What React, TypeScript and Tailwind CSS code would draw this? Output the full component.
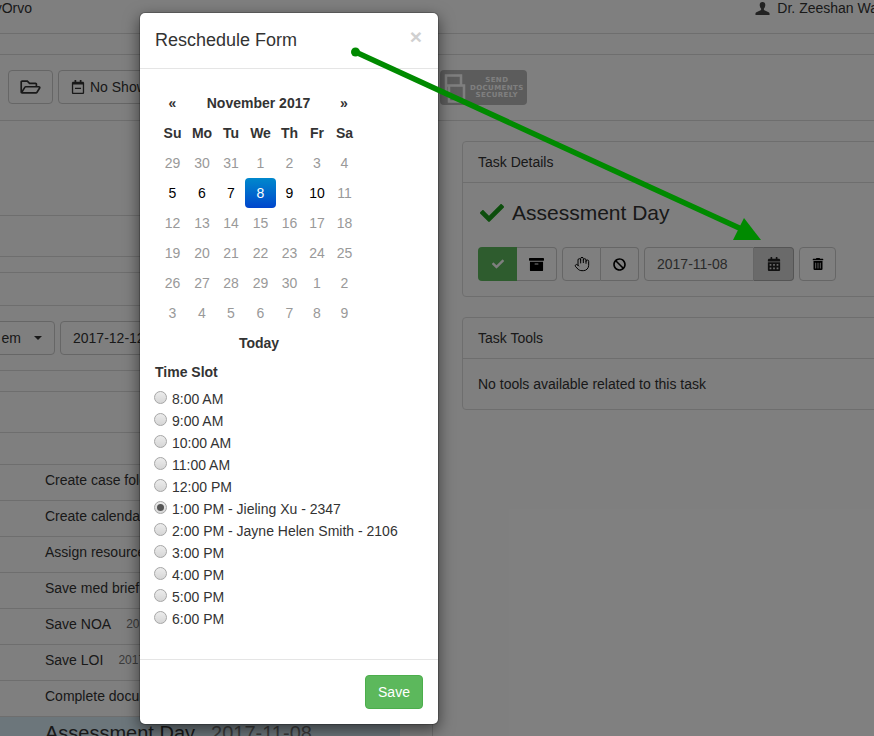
import { FaArchive, FaBan, FaCalendarAlt, FaCheck, FaRegCalendarMinus, FaRegFolderOpen, FaTrashAlt } from 'react-icons/fa'
import { Hand } from 'lucide-react'

const columns = ['w-[29px]', 'w-[30px]', 'w-[28px]', 'w-[31px]', 'w-[27px]', 'w-[28px]', 'w-[27px]']
const weekDays = ['Su', 'Mo', 'Tu', 'We', 'Th', 'Fr', 'Sa']
const weeks = [
  ['29', '30', '31', '1', '2', '3', '4'],
  ['5', '6', '7', '8', '9', '10', '11'],
  ['12', '13', '14', '15', '16', '17', '18'],
  ['19', '20', '21', '22', '23', '24', '25'],
  ['26', '27', '28', '29', '30', '1', '2'],
  ['3', '4', '5', '6', '7', '8', '9'],
]
const activeDays = ['5', '6', '7', '9', '10']

const slots = [
  '8:00 AM',
  '9:00 AM',
  '10:00 AM',
  '11:00 AM',
  '12:00 PM',
  '1:00 PM - Jieling Xu - 2347',
  '2:00 PM - Jayne Helen Smith - 2106',
  '3:00 PM',
  '4:00 PM',
  '5:00 PM',
  '6:00 PM',
]

const tasks = [
  { name: 'Create case folder' },
  { name: 'Create calendar' },
  { name: 'Assign resources' },
  { name: 'Save med brief' },
  { name: 'Save NOA', date: '2017-11-08' },
  { name: 'Save LOI', date: '2017-11-08' },
  { name: 'Complete documents' },
]

function Radio({ checked }: { checked?: boolean }) {
  return (
    <span className="mt-[-4px] mr-[5px] flex h-[13px] w-[13px] shrink-0 items-center justify-center rounded-full border border-[#a6a6a6] bg-gradient-to-b from-[#ececec] to-[#d6d6d6]">
      {checked && <span className="h-[7px] w-[7px] rounded-full bg-[#555]" />}
    </span>
  )
}

function Calendar() {
  return (
    <div className="ml-[18px] mt-[19px] w-[200px] text-sm text-[#333]">
      <div className="flex h-[30px] items-center font-bold">
        <span className="w-[29px] text-center">«</span>
        <span className="w-[143px] text-center">November 2017</span>
        <span className="w-[28px] text-center">»</span>
      </div>
      <div className="flex h-[30px] items-center font-bold">
        {weekDays.map((d, i) => (
          <span key={d} className={`${columns[i]} text-center`}>{d}</span>
        ))}
      </div>
      {weeks.map((week, w) => (
        <div key={w} className="flex h-[30px]">
          {week.map((day, i) => {
            const selected = w === 1 && day === '8'
            const current = w === 1 && activeDays.includes(day)
            return (
              <span
                key={i}
                className={`${columns[i]} flex items-center justify-center rounded ${
                  selected ? 'bg-gradient-to-b from-[#0088cc] to-[#0044cc] text-white' : current ? 'text-black' : 'text-[#999]'
                }`}
              >
                {day}
              </span>
            )
          })}
        </div>
      ))}
      <div className="flex h-[30px] items-center justify-center pl-[2px] font-bold">Today</div>
    </div>
  )
}

function RescheduleModal() {
  return (
    <div className="absolute left-[139px] top-[12px] flex h-[713px] w-[300px] flex-col rounded-md border border-black/20 bg-white bg-clip-padding shadow-[0_5px_15px_rgba(0,0,0,0.5)]">
      <div className="flex h-[56px] shrink-0 justify-between border-b border-[#e5e5e5] pl-[15px] pr-[16px]">
        <h4 className="mt-[14px] text-lg leading-[26px] text-[#333]">Reschedule Form</h4>
        <span className="mt-[9px] text-[21px] font-bold leading-[30px] text-[#d0d0d0]">×</span>
      </div>
      <Calendar />
      <div className="ml-[15px] mt-[4px] text-sm font-bold leading-5 text-[#333]">Time Slot</div>
      <div className="ml-[14px] mt-[6px]">
        {slots.map((slot, i) => (
          <div key={slot} className="flex h-[22px] items-center text-sm text-[#333]">
            <Radio checked={i === 5} />
            {slot}
          </div>
        ))}
      </div>
      <div className="mt-[29px] flex flex-1 justify-end border-t border-[#e5e5e5] pr-[15px] pt-[15px]">
        <button className="h-[34px] w-[58px] rounded border border-[#4cae4c] bg-[#5cb85c] text-sm text-white">Save</button>
      </div>
    </div>
  )
}

function LeftColumn() {
  return (
    <div className="w-[433px] shrink-0 border-r border-[#ddd] text-sm text-[#333]">
      <div className="h-[95px] border-b border-[#ddd]" />
      <div className="h-[41px] border-b border-[#ddd]" />
      <div className="h-[16px] border-b border-[#ddd]" />
      <div className="h-[33px] border-b border-[#ddd]" />
      <div className="flex h-[65px] gap-[5px] border-b border-[#ddd] pt-[15px]">
        <div className="-ml-[20px] flex h-[34px] w-[75px] items-center justify-end gap-[13px] rounded border border-[#ccc] pr-[12px]">
          <span className="-ml-[2px]">em</span>
          <span className="h-0 w-0 border-x-4 border-t-4 border-x-transparent border-t-[#333]" />
        </div>
        <div className="flex h-[34px] w-[120px] items-center rounded border border-[#ccc] pl-[12px]">2017-12-12</div>
      </div>
      <div className="h-[21px] border-b border-[#ddd]" />
      <div className="h-[41px] border-b border-[#ddd]" />
      <div className="h-[32px] border-b border-[#ddd]" />
      {tasks.map((task) => (
        <div key={task.name} className="flex h-[36px] items-center gap-[15px] border-b border-[#ddd] pb-[6px] pl-[45px]">
          {task.name}
          {task.date && <span className="text-xs text-[#777]">{task.date}</span>}
        </div>
      ))}
      <div className="flex h-[40px] w-[400px] items-start gap-[16px] bg-[#d9edf7] pl-[45px] pt-[2px] text-xl leading-[28px]">
        Assessment Day
        <span className="text-[#777]">2017-11-08</span>
      </div>
    </div>
  )
}

function TaskPanels() {
  return (
    <div className="ml-[29px] mt-[20px] w-[500px] shrink-0 text-sm text-[#333]">
      <div className="h-[156px] rounded border border-[#ddd]">
        <div className="flex h-[41px] items-center border-b border-[#ddd] pl-[15px]">Task Details</div>
        <div className="ml-[17px] mt-[16px] flex items-center gap-[8px] text-[21px] leading-[28px]">
          <FaCheck className="h-[24px] w-[24px] text-[#1a9c1a]" />
          Assessment Day
        </div>
        <div className="ml-[15px] mt-[20px] flex gap-[5px]">
          <div className="flex h-[34px]">
            <button className="flex w-[39px] items-center justify-center rounded-l bg-[#5cb85c] text-white">
              <FaCheck className="h-[12px] w-[12px]" />
            </button>
            <button className="flex w-[40px] items-center justify-center rounded-r border border-l-0 border-[#ccc] text-black">
              <FaArchive className="h-[15px] w-[15px]" />
            </button>
          </div>
          <div className="flex h-[34px]">
            <button className="flex w-[39px] items-center justify-center rounded-l border border-[#ccc] text-black">
              <Hand className="h-[16px] w-[16px]" strokeWidth={1.5} />
            </button>
            <button className="flex w-[38px] items-center justify-center rounded-r border border-l-0 border-[#ccc] text-black">
              <FaBan className="h-[13px] w-[13px]" />
            </button>
          </div>
          <div className="flex h-[34px]">
            <div className="flex w-[110px] items-center rounded-l border border-[#ccc] pl-[12px] text-[#555]">2017-11-08</div>
            <button className="flex w-[40px] items-center justify-center rounded-r border border-l-0 border-[#aaa] bg-[#d4d4d4] text-[#222]">
              <FaCalendarAlt className="h-[14px] w-[14px]" />
            </button>
          </div>
          <button className="flex h-[34px] w-[37px] items-center justify-center rounded border border-[#ccc] text-black">
            <FaTrashAlt className="h-[12px] w-[12px]" />
          </button>
        </div>
      </div>
      <div className="mt-[20px] h-[93px] rounded border border-[#ddd]">
        <div className="flex h-[41px] items-center border-b border-[#ddd] pl-[15px]">Task Tools</div>
        <p className="pl-[15px] pt-[15px] leading-5">No tools available related to this task</p>
      </div>
    </div>
  )
}

function SendLogo() {
  return (
    <div className="ml-[277px] flex h-[35px] w-[87px] items-center rounded bg-[#b8b8b8]">
      <svg width="30" height="35" viewBox="0 0 30 35" className="shrink-0" fill="none" stroke="#ffffff" strokeWidth="2.5">
        <path d="M6 24V5.500h15v10H6M9 15.500h15v16H9z" />
      </svg>
      <div className="mt-[2px] text-center font-['DejaVu_Sans',sans-serif] text-[7px] font-bold leading-[7.5px] tracking-[0.4px] text-white">
        SEND
        <br />
        DOCUMENTS
        <br />
        SECURELY
      </div>
    </div>
  )
}

export default function App() {
  return (
    <div className="relative h-[736px] w-[874px] overflow-hidden bg-white font-['Liberation_Sans',Arial,sans-serif]">
      <header className="flex h-[34px] items-start justify-between border-b border-[#ddd] text-sm leading-[16px] text-[#333]">
        <span className="-ml-[17px]">MyOrvo</span>
        <span className="-mr-[4px] flex items-center gap-[7px]">
          <svg width="15" height="15" viewBox="0 0 16 16" fill="#444">
            <path d="M8 1C6 1 5 2.300 5 4.200c0 1.600.7 3 1.500 3.800v1.500L1.500 12c-.6.3-1 .7-1 1.300V15h15v-1.700c0-.6-.4-1-1-1.300l-5-2.500V8C10.300 7.200 11 5.800 11 4.200 11 2.300 10 1 8 1z" />
          </svg>
          Dr. Zeeshan Wa
        </span>
      </header>
      <div className="h-[21px] border-b border-[#ddd]" />
      <div className="flex h-[66px] items-start gap-[5px] border-b border-[#ddd] pl-[8px] pt-[15px] text-sm text-[#333]">
        <button className="flex h-[34px] w-[45px] items-center justify-center rounded border border-[#ccc]">
          <FaRegFolderOpen className="h-[18px] w-[21px]" />
        </button>
        <button className="flex h-[34px] w-[100px] items-center gap-[5px] rounded border border-[#ccc] pl-[12px]">
          <FaRegCalendarMinus className="h-[14px] w-[14px]" />
          No Show
        </button>
        <SendLogo />
      </div>
      <main className="flex">
        <LeftColumn />
        <TaskPanels />
      </main>

      <div className="absolute inset-0 bg-black/50" />
      <RescheduleModal />

      <svg className="absolute inset-0" width="874" height="736" viewBox="0 0 874 736">
        <circle cx="355.5" cy="52" r="4.5" fill="#008a00" />
        <line x1="355.5" y1="52" x2="748" y2="232" stroke="#008a00" strokeWidth="5.5" />
        <polygon points="733,240 761,240 744,218" fill="#008a00" />
      </svg>
    </div>
  )
}
